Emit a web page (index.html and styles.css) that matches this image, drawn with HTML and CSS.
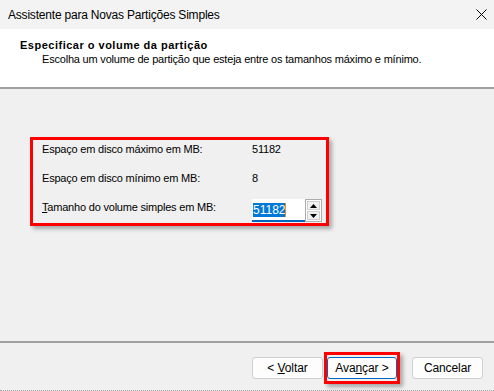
FILE: index.html
```html
<!DOCTYPE html>
<html lang="pt-BR">
<head>
  <meta charset="UTF-8">
  <meta name="viewport" content="width=device-width, initial-scale=1.0">
  <title>Assistente para Novas Partições Simples</title>
  <link rel="stylesheet" href="styles.css">
</head>
<body>
  <div class="window">
    <div class="titlebar">
      <span class="title">Assistente para Novas Partições Simples</span>
      <span class="close" aria-label="Fechar">
        <svg width="11" height="11" viewBox="0 0 11 11"><path d="M0.5 0.5 10.5 10.5 M10.5 0.5 0.5 10.5" stroke="#000" stroke-width="1" fill="none"/></svg>
      </span>
    </div>
    <div class="header">
      <h1 class="heading">Especificar o volume da partição</h1>
      <p class="subtitle">Escolha um volume de partição que esteja entre os tamanhos máximo e mínimo.</p>
    </div>
    <div class="content">
      <div class="highlight">
        <div class="row">
          <span class="label">Espaço em disco máximo em MB:</span>
          <span class="value">51182</span>
        </div>
        <div class="row">
          <span class="label">Espaço em disco mínimo em MB:</span>
          <span class="value">8</span>
        </div>
        <div class="row">
          <span class="label"><u>T</u>amanho do volume simples em MB:</span>
          <span class="spin">
            <span class="spin-input"><span class="selected">51182</span><span class="caret"></span></span>
            <span class="spin-buttons">
              <span class="spin-btn"><svg width="7" height="4" viewBox="0 0 7 4"><path d="M3.5 0 7 4H0z" fill="#000"/></svg></span>
              <span class="spin-btn"><svg width="7" height="4" viewBox="0 0 7 4"><path d="M0 0h7L3.5 4z" fill="#000"/></svg></span>
            </span>
          </span>
        </div>
      </div>
    </div>
    <div class="footer">
      <button class="btn">&lt; <u>V</u>oltar</button>
      <span class="focus-mark"><button class="btn btn-default">Ava<u>n</u>çar &gt;</button></span>
      <button class="btn btn-cancel">Cancelar</button>
    </div>
  </div>
</body>
</html>
```

FILE: styles.css
```css
* {
  margin: 0;
  padding: 0;
  box-sizing: border-box;
}
body {
  font-family: "Liberation Sans", Arial, sans-serif;
  font-size: 11px;
  letter-spacing: -0.2px;
  color: #000;
  background: #f0f0f0;
}
.window {
  width: 494px;
  height: 391px;
  display: flex;
  flex-direction: column;
  background: #f0f0f0;
  border-bottom: 1px dotted #a0a0a0;
}
.titlebar {
  height: 29px;
  display: flex;
  align-items: center;
  justify-content: space-between;
  padding: 0 7px 0 8px;
  background: #f3f3f3;
}
.title {
  font-size: 12px;
  letter-spacing: -0.2px;
}
.close {
  display: flex;
  margin-top: -1px;
}
.header {
  height: 60px;
  background: #fff;
  padding: 9px 0 0 20px;
  border-bottom: 2px solid #a0a0a0;
}
.heading {
  font-size: 11px;
  font-weight: bold;
  line-height: 14px;
  letter-spacing: 0.5px;
}
.subtitle {
  line-height: 14px;
  padding-left: 22px;
}
.content {
  height: 254px;
  padding: 48px 0 0 30px;
  border-bottom: 2px solid #a0a0a0;
}
.highlight {
  width: 299px;
  height: 89px;
  border: 3px solid #f00;
  box-shadow: 3px 3px 4px rgba(0, 0, 0, 0.3);
  padding: 0 0 0 9px;
  display: flex;
  flex-direction: column;
  gap: 11px;
}
.row {
  display: flex;
  align-items: center;
  height: 18px;
}
.label {
  width: 210px;
}
.spin {
  display: flex;
  height: 23px;
  align-self: flex-start;
  margin-top: 1px;
}
.spin-input {
  width: 53px;
  background: #fff;
  border-bottom: 2px solid #0067c0;
  display: flex;
  align-items: center;
  padding-left: 1px;
}
.selected {
  background: #0078d7;
  color: #fff;
  line-height: 14px;
  font-size: 12px;
  letter-spacing: 0;
}
.caret {
  width: 1px;
  height: 14px;
  background: #ff8c00;
}
.spin-buttons {
  width: 17px;
  border: 1px solid #adadad;
  display: flex;
  flex-direction: column;
  gap: 1px;
  padding: 1px;
  background: #fff;
}
.spin-btn {
  flex: 1;
  display: flex;
  align-items: center;
  justify-content: center;
  background: #f0f0f0;
  border: 1px solid #cfcfcf;
}
.footer {
  flex: 1;
  display: flex;
  align-items: center;
  justify-content: flex-end;
  padding: 3px 11px 0 0;
}
.btn {
  font-family: inherit;
  font-size: 12px;
  letter-spacing: -0.1px;
  width: 71px;
  height: 22px;
  background: #fdfdfd;
  border: 1px solid #d0d0d0;
  border-radius: 3px;
  color: #000;
}
.focus-mark {
  display: flex;
  padding: 2px 0;
  margin: 0 12px 0 1px;
  border: 3px solid #f00;
  box-shadow: 3px 3px 4px rgba(0, 0, 0, 0.3);
}
.btn-default {
  border: 1px solid #0067c0;
  width: 70px;
}
```
